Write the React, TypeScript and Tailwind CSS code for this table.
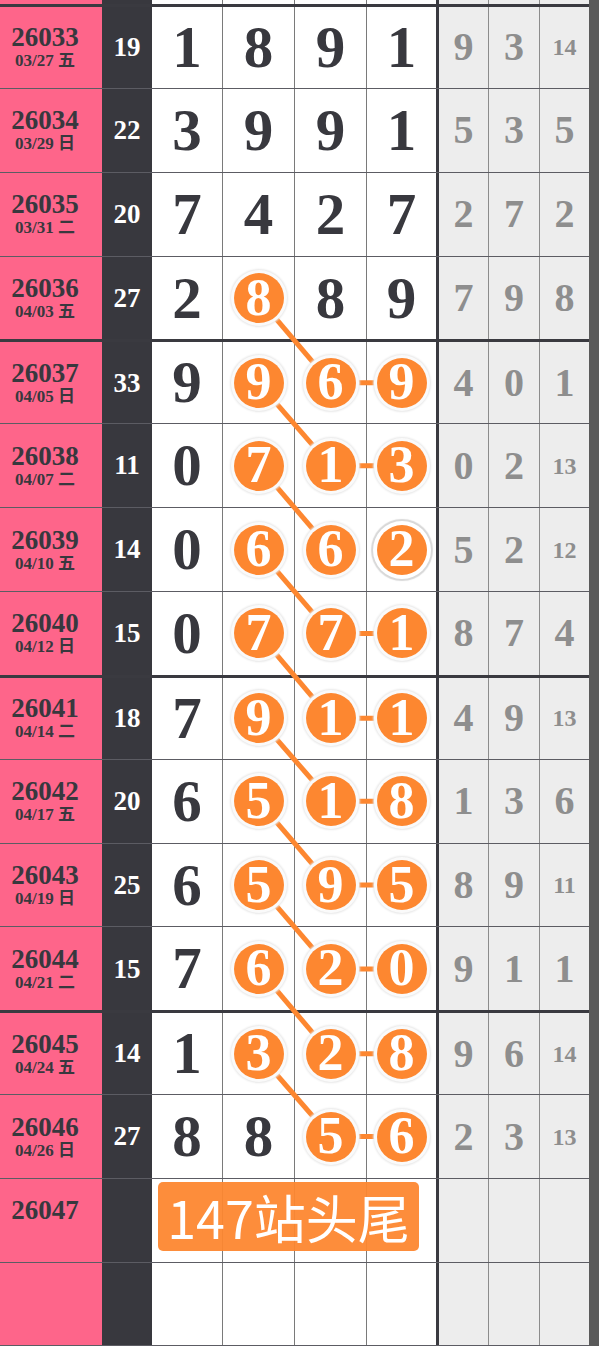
import React from 'react';

type Row = {
  issue: string;
  date?: string;
  sum?: number;
  nums?: number[];
  circled?: boolean[];
  tail?: number[];
};

const ROWS: Row[] = [
  { issue: '26033', date: '03/27 五', sum: 19, nums: [1, 8, 9, 1], tail: [9, 3, 14] },
  { issue: '26034', date: '03/29 日', sum: 22, nums: [3, 9, 9, 1], tail: [5, 3, 5] },
  { issue: '26035', date: '03/31 二', sum: 20, nums: [7, 4, 2, 7], tail: [2, 7, 2] },
  { issue: '26036', date: '04/03 五', sum: 27, nums: [2, 8, 8, 9], circled: [false, true, false, false], tail: [7, 9, 8] },
  { issue: '26037', date: '04/05 日', sum: 33, nums: [9, 9, 6, 9], circled: [false, true, true, true], tail: [4, 0, 1] },
  { issue: '26038', date: '04/07 二', sum: 11, nums: [0, 7, 1, 3], circled: [false, true, true, true], tail: [0, 2, 13] },
  { issue: '26039', date: '04/10 五', sum: 14, nums: [0, 6, 6, 2], circled: [false, true, true, true], tail: [5, 2, 12] },
  { issue: '26040', date: '04/12 日', sum: 15, nums: [0, 7, 7, 1], circled: [false, true, true, true], tail: [8, 7, 4] },
  { issue: '26041', date: '04/14 二', sum: 18, nums: [7, 9, 1, 1], circled: [false, true, true, true], tail: [4, 9, 13] },
  { issue: '26042', date: '04/17 五', sum: 20, nums: [6, 5, 1, 8], circled: [false, true, true, true], tail: [1, 3, 6] },
  { issue: '26043', date: '04/19 日', sum: 25, nums: [6, 5, 9, 5], circled: [false, true, true, true], tail: [8, 9, 11] },
  { issue: '26044', date: '04/21 二', sum: 15, nums: [7, 6, 2, 0], circled: [false, true, true, true], tail: [9, 1, 1] },
  { issue: '26045', date: '04/24 五', sum: 14, nums: [1, 3, 2, 8], circled: [false, true, true, true], tail: [9, 6, 14] },
  { issue: '26046', date: '04/26 日', sum: 27, nums: [8, 8, 5, 6], circled: [false, false, true, true], tail: [2, 3, 13] },
  { issue: '26047' },
  { issue: '' },
];

// 行の高さ・位置（線の座標計算用）
const TOP = 4;
const ROW_H = 83.86;
const COL_X = [187, 258.5, 330.5, 401.5];

const isGroupStart = (i: number) => i % 4 === 0 && i < 14;
const rowCenter = (i: number) => TOP + ROW_H * i + (ROW_H + (isGroupStart(i) ? 3 : 1)) / 2;

// 斜め線: 2列目→次の行の3列目 / 横線: 3列目-4列目
const DIAG = [3, 4, 5, 6, 7, 8, 9, 10, 11, 12];
const HORIZ = [4, 5, 7, 8, 9, 10, 11, 12, 13];

const GRID = 'grid grid-cols-[102px_50px_71px_72px_72px_69px_53px_51px_49px]';

const Circle: React.FC<{ n: number; strong?: boolean }> = ({ n, strong }) => (
  <span
    className={`relative z-10 flex h-[50px] w-[50px] items-center justify-center rounded-full bg-[#fd8730] text-[52px] leading-none text-white ${
      strong
        ? 'shadow-[0_0_0_4px_#fff,0_0_1px_6px_#d8d8d8]'
        : 'shadow-[0_0_0_3px_#fafafa,0_0_2px_4px_#e8e8e8]'
    }`}
  >
    <span className="-mt-[1px]">{n}</span>
  </span>
);

const App: React.FC = () => {
  return (
    <div className="flex h-[1346px] w-[599px] overflow-hidden bg-white font-['Liberation_Serif','Noto_Sans_CJK_SC',serif] font-bold text-[#38383e]">
      <div className="relative w-[589px]">
        {/* 上の切れた行 */}
        <div className={`${GRID} h-[4px]`}>
          <div className="bg-[#fe658a]" />
          <div className="bg-[#38383e]" />
          <div className="border-r border-[#7a7a7a] bg-white" />
          <div className="border-r border-[#7a7a7a] bg-white" />
          <div className="border-r border-[#7a7a7a] bg-white" />
          <div className="bg-white" />
          <div className="border-l-[3px] border-r border-[#3a3a40] border-r-[#8c8c8c] bg-[#ededed]" />
          <div className="border-r border-[#8c8c8c] bg-[#ededed]" />
          <div className="bg-[#ededed]" />
        </div>

        {ROWS.map((row, i) => (
          <div
            key={i}
            className={`${GRID} relative h-[83.86px] ${
              isGroupStart(i) ? 'border-t-[3px] border-[#3a3a40]' : 'border-t border-[#5c5c63]'
            } ${i === ROWS.length - 1 ? 'border-b border-b-[#5c5c63]' : ''}`}
          >
            {/* 期号 */}
            <div className="flex flex-col items-center justify-center bg-[#fe658a] pr-[12px]">
              <span className="text-[27px] leading-[28px]">{row.issue}</span>
              <span className="text-[17px] leading-[20px]">{row.date ?? '\u00a0'}</span>
            </div>
            {/* 和値 */}
            <div className="flex items-center justify-center bg-[#38383e] text-[27px] text-white">
              {row.sum}
            </div>
            {/* 開奨番号 */}
            {[0, 1, 2, 3].map(c => (
              <div
                key={c}
                className={`flex items-center justify-center bg-white text-[59px] leading-none ${
                  c < 3 ? 'border-r border-[#7a7a7a]' : ''
                }`}
              >
                {row.nums &&
                  (row.circled?.[c] ? (
                    <Circle n={row.nums[c]} strong={i === 6 && c === 3} />
                  ) : (
                    <span>{row.nums[c]}</span>
                  ))}
              </div>
            ))}
            {/* 尾数 */}
            {[0, 1, 2].map(c => {
              const v = row.tail?.[c];
              return (
                <div
                  key={c}
                  className={`flex items-center justify-center bg-[#ededed] leading-none text-[#8e8e8e] ${
                    c === 0 ? 'border-l-[3px] border-l-[#3a3a40]' : ''
                  } ${c < 2 ? 'border-r border-r-[#8c8c8c]' : ''} ${
                    v !== undefined && v >= 10 ? 'text-[24px]' : 'text-[40px]'
                  }`}
                >
                  {v}
                </div>
              );
            })}

            {row.issue === '26047' && (
              <div className="absolute left-[158px] top-[3px] z-20 flex h-[69px] w-[261px] items-center justify-center rounded-[5px] bg-[#fd8730]/95 font-['Noto_Sans_CJK_SC',sans-serif] text-[52px] font-normal leading-none text-white">
                147站头尾
              </div>
            )}
          </div>
        ))}

        {/* 連結線 */}
        <svg className="pointer-events-none absolute left-0 top-0" width="589" height="1346">
          {DIAG.map(r => (
            <line
              key={`d${r}`}
              x1={COL_X[1]}
              y1={rowCenter(r)}
              x2={COL_X[2]}
              y2={rowCenter(r + 1)}
              stroke="#fd8730"
              strokeWidth="5"
            />
          ))}
          {HORIZ.map(r => (
            <line
              key={`h${r}`}
              x1={COL_X[2]}
              y1={rowCenter(r)}
              x2={COL_X[3]}
              y2={rowCenter(r)}
              stroke="#fd8730"
              strokeWidth="5"
            />
          ))}
        </svg>
      </div>
      <div className="w-[10px] bg-[#5a5a5a]" />
    </div>
  );
};

export default App;
